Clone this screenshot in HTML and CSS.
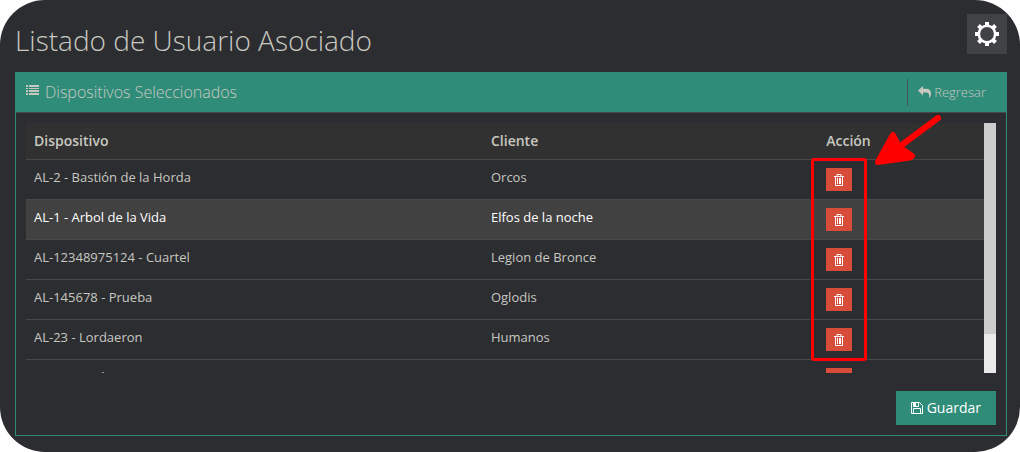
FILE: index.html
```html
<!DOCTYPE html>
<html lang="es">
<head>
<meta charset="utf-8">
<title>Listado de Usuario Asociado</title>
<link rel="stylesheet" href="styles.css">
</head>
<body>
<svg class="symbols" aria-hidden="true">
  <symbol id="trash" viewBox="0 0 10 12"><path fill="none" stroke="currentColor" d="M0 2.500h10M3 2.500v-2h4v2M1.500 3v8.500h7V3M3.500 4v6M5.500 4v6M6.500 4v6"/></symbol>
</svg>
<main class="page">
  <header class="page-header">
    <h1 class="title">Listado de Usuario Asociado</h1>
    <button class="settings" type="button" aria-label="Configuración">
      <svg width="24" height="24" viewBox="0 0 24 24"><circle cx="12" cy="12" r="8.200" fill="none" stroke="currentColor" stroke-width="2.600"/><g stroke="currentColor" stroke-width="4"><path d="M12 0v4M12 20v4M0 12h4M20 12h4M3.500 3.500l3 3M17.500 17.500l3 3M3.500 20.500l3-3M17.500 6.500l3-3"/></g></svg>
    </button>
  </header>
  <section class="panel">
    <div class="panel-header">
      <h2 class="panel-title">
        <svg class="list-icon" width="13" height="10" viewBox="0 0 13 10" fill="currentColor"><path d="M0 0h2v2H0zM3 0h10v2H3zM0 3h2v1H0zM3 3h10v1H3zM0 5h2v2H0zM3 5h10v2H3zM0 8h2v2H0zM3 8h10v2H3z"/></svg>
        Dispositivos Seleccionados
      </h2>
      <a class="back" href="#">
        <svg width="13" height="12" viewBox="0 0 13 12" fill="currentColor"><path d="M0 4.500L5 0v2.800h3c3.500 0 5 1.800 5 4.500 0 1.800-.6 3.200-1.500 4.400l-.5-.2c.6-3.200-.2-5-3-5H5v3z"/></svg>
        Regresar
      </a>
    </div>
    <div class="panel-body">
      <div class="scroll-area">
        <div class="frame">
          <div class="viewport">
            <table class="devices">
              <thead><tr><th class="col-device">Dispositivo</th><th class="col-client">Cliente</th><th>Acción</th></tr></thead>
              <tbody>
                <tr><td>AL-2 - Bastión de la Horda</td><td>Orcos</td><td><button class="delete" type="button" aria-label="Eliminar"><svg width="10" height="12"><use href="#trash"/></svg></button></td></tr>
                <tr class="active"><td>AL-1 - Arbol de la Vida</td><td>Elfos de la noche</td><td><button class="delete" type="button" aria-label="Eliminar"><svg width="10" height="12"><use href="#trash"/></svg></button></td></tr>
                <tr><td>AL-12348975124 - Cuartel</td><td>Legion de Bronce</td><td><button class="delete" type="button" aria-label="Eliminar"><svg width="10" height="12"><use href="#trash"/></svg></button></td></tr>
                <tr><td>AL-145678 - Prueba</td><td>Oglodis</td><td><button class="delete" type="button" aria-label="Eliminar"><svg width="10" height="12"><use href="#trash"/></svg></button></td></tr>
                <tr><td>AL-23 - Lordaeron</td><td>Humanos</td><td><button class="delete" type="button" aria-label="Eliminar"><svg width="10" height="12"><use href="#trash"/></svg></button></td></tr>
                <tr><td>AL-3 - Bastón</td><td></td><td><button class="delete" type="button" aria-label="Eliminar"><svg width="10" height="12"><use href="#trash"/></svg></button></td></tr>
              </tbody>
            </table>
          </div>
          <div class="highlight"></div>
          <svg class="arrow" width="68" height="56" viewBox="0 0 68 56"><path d="M63 4L24 33" stroke="#f00" stroke-width="6" stroke-linecap="round"/><path d="M3 48L18 21L24 33L37 42Q36 44 31 44Z" fill="#f00" stroke="#f00" stroke-width="6" stroke-linejoin="round"/></svg>
        </div>
        <div class="track"><div class="thumb"></div></div>
      </div>
      <div class="actions">
        <button class="save" type="button">
          <svg width="12" height="12" viewBox="0 0 12 12" fill="none" stroke="currentColor"><path d="M.5.5h8l3 3v8H.5zM2.500 11V6.500h7V11M2.500 1v3.500h5V1"/><path d="M3 1h2v3H3z" fill="currentColor" stroke="none"/></svg>
          Guardar
        </button>
      </div>
    </div>
  </section>
</main>
</body>
</html>
```

FILE: styles.css
```css
* { box-sizing: border-box; }
body {
  margin: 0;
  background: #fff;
  font-family: "Open Sans", sans-serif;
  font-size: 13px;
  line-height: 18px;
  color: #c8c8c0;
}
svg { display: block; flex: none; }
button { font: inherit; border: 0; padding: 0; cursor: pointer; }
.symbols { position: absolute; width: 0; height: 0; }
.page {
  min-height: 100vh;
  padding: 14px 13px 16px 15px;
  border-radius: 45px;
  background: #2c2d31;
}
.page-header {
  display: flex;
  justify-content: space-between;
  align-items: flex-start;
  padding-bottom: 6px;
}
.title { margin: 0; font-size: 28px; line-height: 52px; font-weight: 300; }
.settings {
  display: grid;
  place-items: center;
  width: 40px;
  height: 40px;
  background: #414246;
  color: #fff;
}
.panel { border: 1px solid #2f8c79; border-top: 0; }
.panel-header {
  display: flex;
  justify-content: space-between;
  align-items: center;
  height: 41px;
  padding: 0 20px 0 10px;
  background: #2f8c79;
  border-bottom: 1px solid #484948;
}
.panel-title {
  display: flex;
  align-items: center;
  gap: 6px;
  margin: 0;
  font-size: 16px;
  font-weight: 300;
}
.list-icon { margin-bottom: 4px; }
.back {
  display: flex;
  align-items: center;
  gap: 3px;
  padding: 4px 0 5px 10px;
  border-left: 1px solid #42574f;
  color: inherit;
  font-weight: 300;
  text-decoration: none;
}
.panel-body { padding: 10px; }
.scroll-area { display: flex; }
.frame { position: relative; flex: 1; }
.viewport { height: 250px; overflow: hidden; }
.devices { width: 100%; table-layout: fixed; border-collapse: separate; border-spacing: 0; }
.devices th {
  height: 37px;
  padding: 0 8px;
  text-align: left;
  font-size: 14px;
  font-weight: 600;
  background: #313131;
  border-bottom: 1px solid #484948;
}
.devices td {
  height: 40px;
  padding: 8px;
  vertical-align: top;
  border-bottom: 1px solid #48494c;
}
.devices .active td { background: #414141; color: #fff; }
.col-device { width: 47.7%; }
.col-client { width: 35%; }
.delete {
  display: grid;
  place-items: center;
  width: 26px;
  height: 23px;
  background: #d84c3a;
  color: #fff;
}
.highlight {
  position: absolute;
  top: 35px;
  left: 81.9%;
  width: 56px;
  height: 203px;
  border: 3px solid #f00;
  border-radius: 3px;
}
.arrow { position: absolute; top: -9px; left: 88.6%; }
.track { width: 12px; background: #eaeaea; }
.thumb { height: 211px; background: #cdcdcd; }
.actions { display: flex; justify-content: flex-end; padding-top: 18px; }
.save {
  display: flex;
  align-items: center;
  gap: 4px;
  height: 34px;
  padding: 0 15px;
  background: #2f8c79;
  color: #fff;
  font-size: 14px;
}
```
